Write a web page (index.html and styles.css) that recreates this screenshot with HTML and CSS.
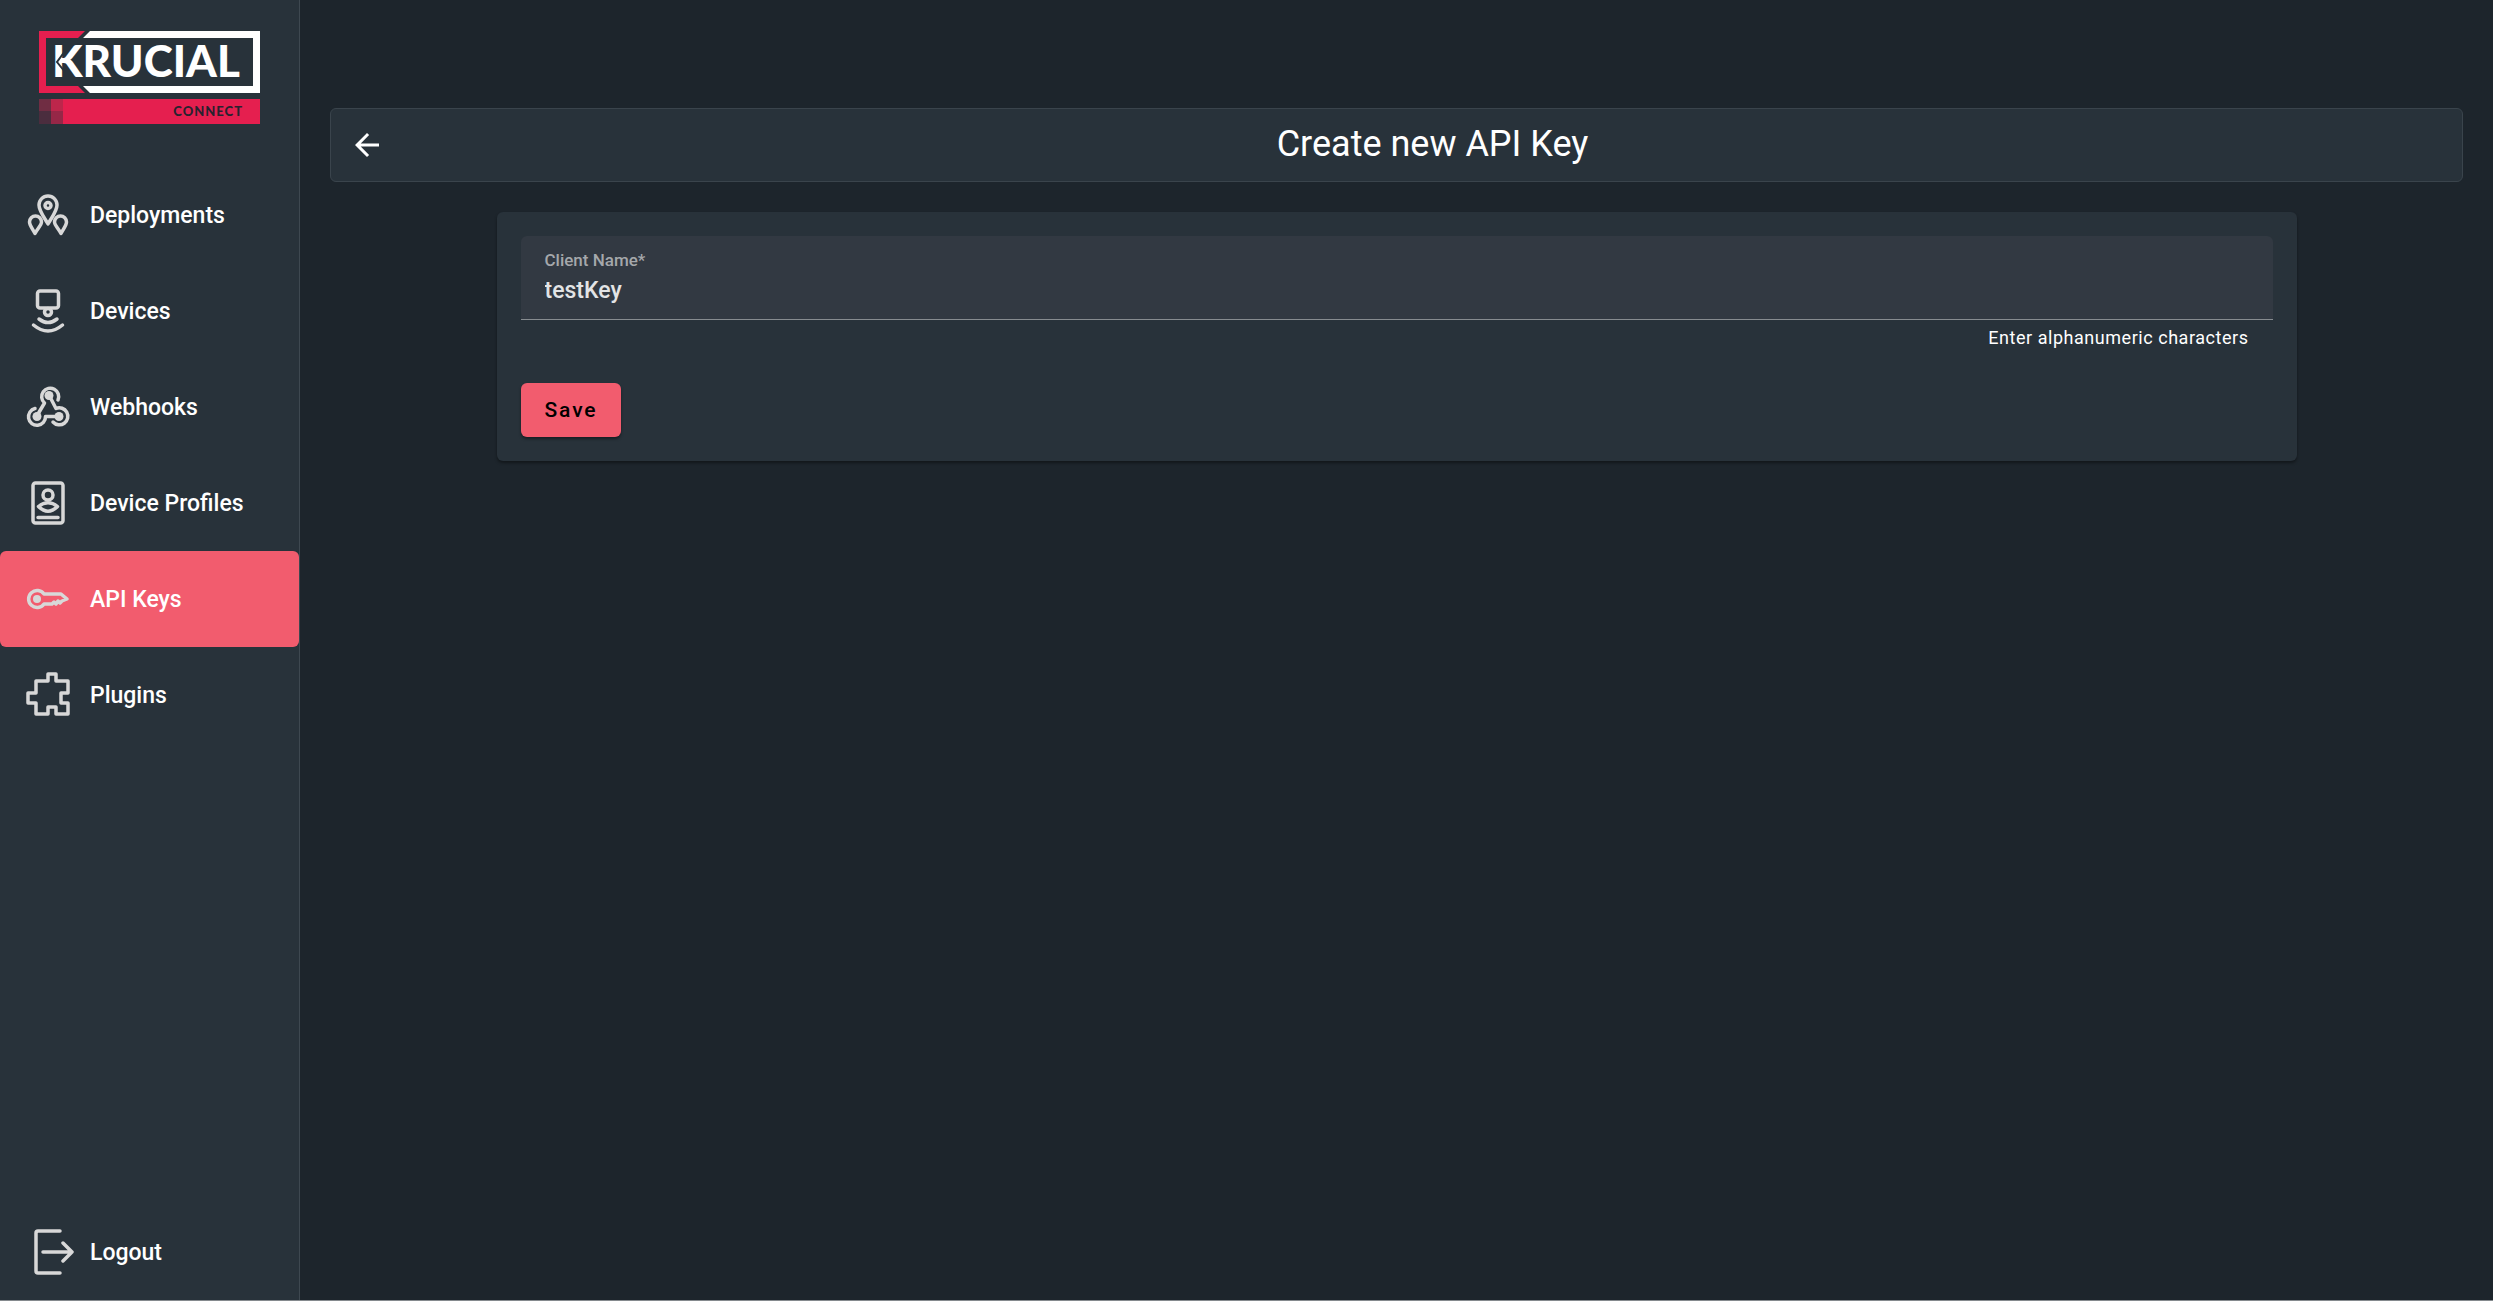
FILE: index.html
```
<!DOCTYPE html>
<html lang="en">
<head>
  <meta charset="UTF-8" />
  <meta name="viewport" content="width=device-width, initial-scale=1.0"/>
  <title>Create new API Key</title>
  <link rel="stylesheet" href="styles.css">
</head>
<body>

  <aside class="sidebar">
    <a href="#" class="logo">
      <svg width="222" height="94" viewBox="0 0 222 94" role="img" aria-label="Krucial Connect">
        <path fill="#e51f4f" d="M0 0H46L39 7H7V55H39L46 62H0Z"/>
        <path fill="#fff" d="M51 0H221V62H51L44 55H214V7H44Z"/>
        <text class="logo-name" x="13" y="46">KRUCIAL</text>
        <path stroke="#28323a" stroke-width="2" fill="none" d="M26 20L18 31L26 41"/>
        <rect fill="#e51f4f" x="24" y="68" width="197" height="25"/>
        <rect fill="#702d43" y="68" width="12" height="12"/>
        <rect fill="#bd264b" x="12" y="68" width="12" height="12"/>
        <rect fill="#4b2d3e" y="80" width="12" height="13"/>
        <rect fill="#962747" x="12" y="80" width="12" height="13"/>
        <text class="logo-sub" x="204" y="85" text-anchor="end">CONNECT</text>
      </svg>
    </a>

    <nav class="menu">
      <a href="#" class="menu-item">
        <svg class="icon" viewBox="0 0 48 48">
          <path d="M24 33C20 26 15 20 15 14a9 9 0 0 1 18 0C33 20 28 26 24 33Z"/>
          <circle cx="24" cy="14.500" r="3"/>
          <path d="M11 42.500C8 37 5.500 34 5.500 31a6 6 0 0 1 12 0C17.500 34 14 37 11 42.500Z"/>
          <path d="M37 42.500C34 37 30.500 34 30.500 31a6 6 0 0 1 12 0C42.500 34 40 37 37 42.500Z"/>
        </svg>
        Deployments
      </a>
      <a href="#" class="menu-item">
        <svg class="icon" viewBox="0 0 48 48">
          <rect x="13.500" y="4" width="21" height="17" rx="2.500"/>
          <circle cx="24" cy="25" r="3.500"/>
          <path d="M15 32Q24 39 33 32M9.500 38Q24 50 38.500 38"/>
        </svg>
        Devices
      </a>
      <a href="#" class="menu-item">
        <svg class="icon" viewBox="0 0 48 48">
          <path d="M34 17A8.500 8.500 0 1 0 20.500 20L14 31"/>
          <path d="M11 25.500A8.500 8.500 0 1 0 21.500 33.500H35"/>
          <path d="M25 12L32 25.500A8.500 8.500 0 1 1 29 39"/>
          <circle class="dot" cx="25" cy="12.500" r="4.500"/>
          <circle class="dot" cx="13" cy="33.500" r="4.500"/>
          <circle class="dot" cx="35" cy="33.500" r="4.500"/>
        </svg>
        Webhooks
      </a>
      <a href="#" class="menu-item">
        <svg class="icon" viewBox="0 0 48 48">
          <rect x="9" y="4" width="30" height="40" rx="2.500"/>
          <circle cx="24" cy="16" r="5"/>
          <path d="M14.500 27.500Q24 20 33.500 27.500Q24 37 14.500 27.500ZM14 38.500H34"/>
        </svg>
        Device Profiles
      </a>
      <a href="#" class="menu-item active">
        <svg class="icon" viewBox="0 0 48 48">
          <path d="M20 19A8.500 8.500 0 1 0 20 29H28L30 27L32 29L34 26L36 28L38 26L43 24L37 19Z"/>
          <circle class="dot" cx="13" cy="24" r="4"/>
        </svg>
        API Keys
      </a>
      <a href="#" class="menu-item">
        <svg class="icon" viewBox="0 0 48 48">
          <path d="M24 10V3H32V10H44V22H37V32H44V43H32V36H24V43H12V32H4V22H12V10Z"/>
        </svg>
        Plugins
      </a>
    </nav>

    <a href="#" class="menu-item logout">
      <svg class="icon" viewBox="0 0 48 48">
        <path d="M36 3H14Q12 3 12 5V43Q12 45 14 45H36M19 24H48M39 15L48 24L39 33"/>
      </svg>
      Logout
    </a>
  </aside>

  <main class="content">
    <header class="page-header">
      <button type="button" class="back-btn" aria-label="Back">
        <svg width="36" height="36" viewBox="0 0 24 24">
          <path fill="#fff" d="M20 11H7.830l5.590-5.590L12 4l-8 8 8 8 1.410-1.410L7.830 13H20v-2z"/>
        </svg>
      </button>
      <h1>Create new API Key</h1>
    </header>

    <form class="card">
      <div class="field">
        <label for="client-name">Client Name*</label>
        <input type="text" id="client-name" value="testKey" required>
      </div>
      <p class="hint">Enter alphanumeric characters</p>
      <button type="button" class="save-btn">Save</button>
    </form>
  </main>

</body>
</html>
```

FILE: styles.css
```
* {
  box-sizing: border-box;
}

body {
  margin: 0;
  min-height: 100vh;
  display: flex;
  font-family: Roboto, sans-serif;
  background-color: #1d252c;
  border-bottom: 1px solid #858a8e;
  color: white;
}

.sidebar {
  width: 300px;
  flex-shrink: 0;
  display: flex;
  flex-direction: column;
  background-color: #28323a;
  border-right: 1px solid #3e4850;
}

.logo {
  height: 167px;
  padding: 31px 39px;
}

.logo svg {
  display: block;
}

.logo-name {
  font-family: Lato, sans-serif;
  font-size: 44px;
  font-weight: 900;
  fill: white;
}

.logo-sub {
  font-family: Lato, sans-serif;
  font-size: 13px;
  font-weight: 900;
  letter-spacing: 1px;
  fill: #28222f;
}

.menu-item {
  display: flex;
  align-items: center;
  gap: 18px;
  height: 96px;
  padding-left: 24px;
  border-radius: 6px;
  color: white;
  font-size: 23px;
  font-weight: 500;
  text-decoration: none;
}

.menu-item.active {
  background-color: #f25c6e;
}

.icon {
  width: 48px;
  height: 48px;
  overflow: visible;
  fill: none;
  stroke: #d8d8d8;
  stroke-width: 3.5;
  stroke-linecap: round;
  stroke-linejoin: round;
}

.icon .dot {
  fill: #d8d8d8;
  stroke: none;
}

.logout {
  margin-top: auto;
}

.content {
  flex: 1;
  padding: 108px 30px 30px;
}

.page-header {
  display: flex;
  align-items: center;
  height: 74px;
  background-color: #28323a;
  border: 1px solid #3a444c;
  border-radius: 6px;
}

.back-btn {
  width: 72px;
  height: 72px;
  padding: 0;
  border: none;
  background: none;
  cursor: pointer;
}

.back-btn svg {
  display: block;
  margin: 0 auto;
}

.page-header h1 {
  flex: 1;
  margin: 0;
  padding-bottom: 2px;
  font-size: 36px;
  font-weight: 400;
  text-align: center;
}

.card {
  max-width: 1800px;
  margin: 30px auto 0;
  padding: 24px;
  border-radius: 6px;
  background-color: #28323a;
  box-shadow: 0 2px 3px rgba(0, 0, 0, 0.4);
}

.field {
  display: flex;
  flex-direction: column;
  height: 84px;
  padding: 14px 24px 0;
  border-bottom: 1px solid #878c90;
  border-radius: 6px 6px 0 0;
  background-color: #323942;
}

.field label {
  color: #a5a8ab;
  font-size: 17px;
  font-weight: 500;
  line-height: 20px;
}

.field input {
  height: 40px;
  padding: 0;
  border: none;
  outline: none;
  background: none;
  color: #e3e4e5;
  font-family: inherit;
  font-size: 23px;
  font-weight: 500;
}

.hint {
  margin: 0;
  padding: 6px 24px 0;
  height: 63px;
  font-size: 18px;
  line-height: 24px;
  letter-spacing: 0.03em;
  text-align: right;
}

.save-btn {
  display: block;
  height: 54px;
  padding: 0 24px;
  border: none;
  border-radius: 6px;
  background-color: #f25c6e;
  box-shadow: 0 2px 3px rgba(0, 0, 0, 0.4);
  color: black;
  font-family: inherit;
  font-size: 21px;
  font-weight: 500;
  letter-spacing: 0.09em;
  cursor: pointer;
}
```
